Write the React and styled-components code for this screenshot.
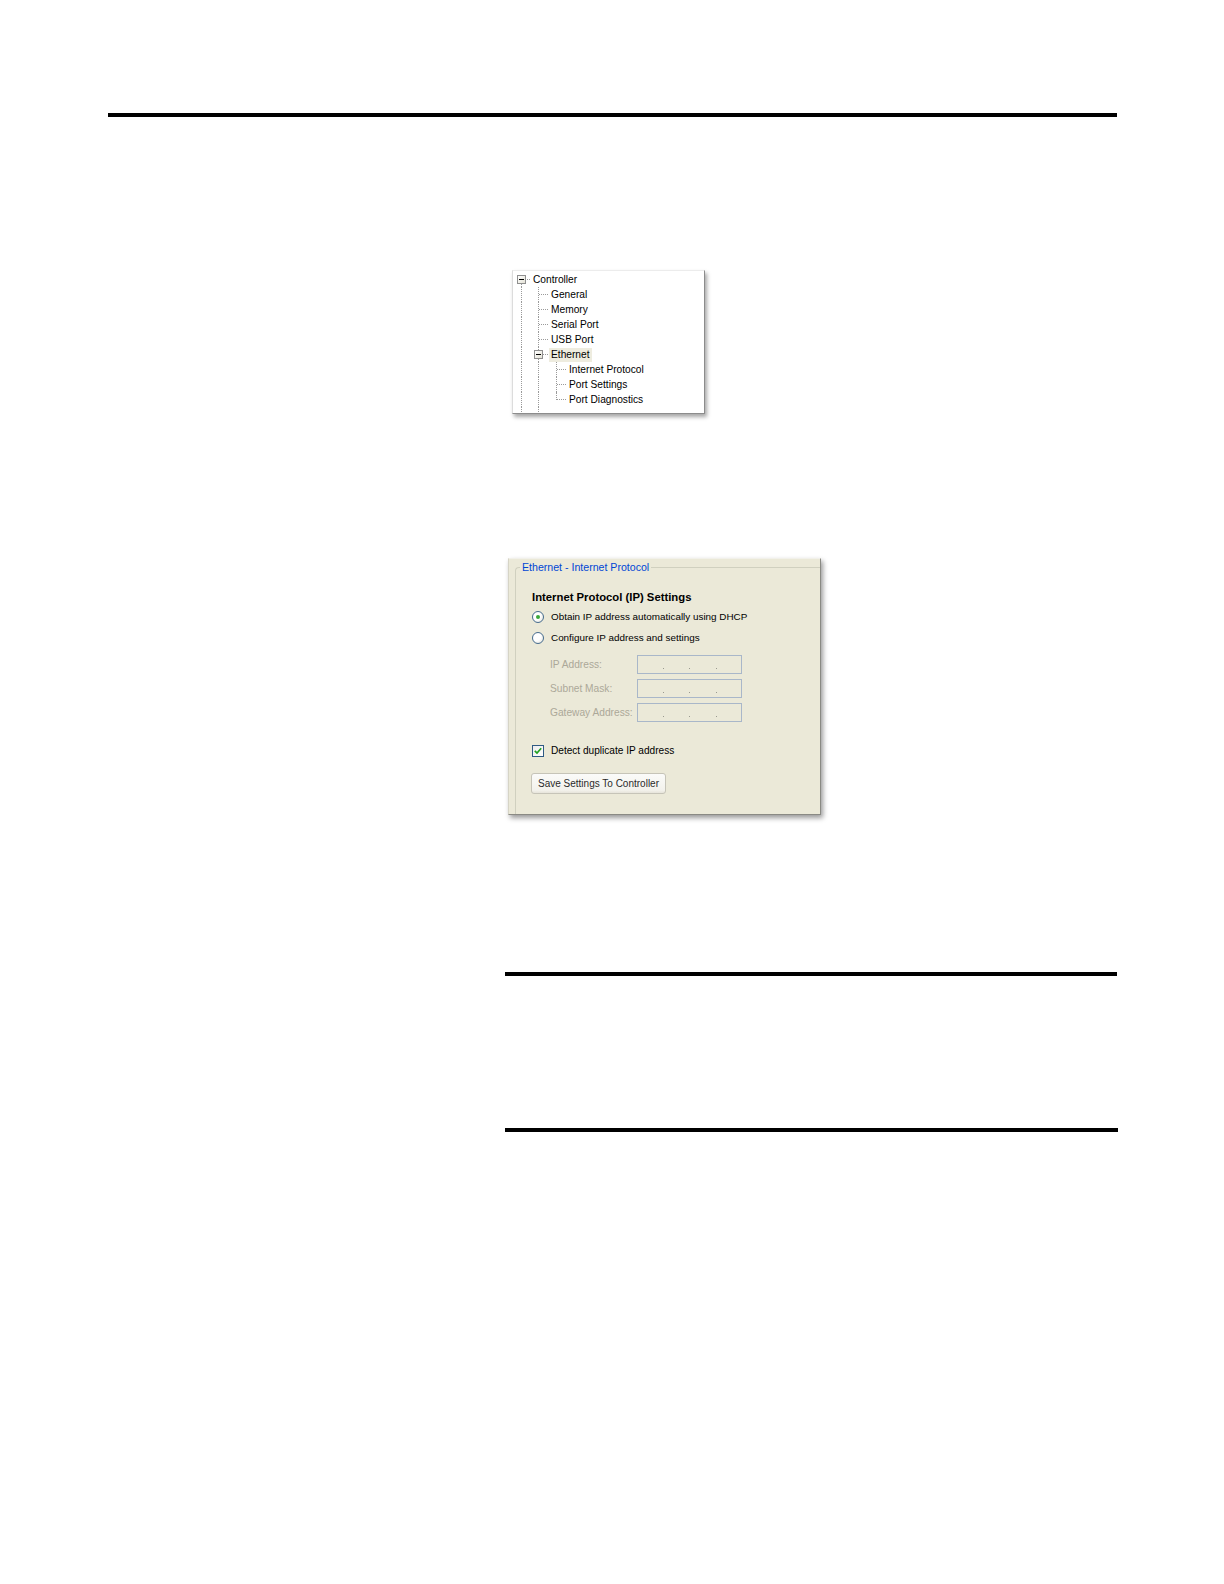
import React from 'react';
import styled, { createGlobalStyle } from 'styled-components';

const GlobalStyle = createGlobalStyle`
  html, body {
    margin: 0;
    padding: 0;
    background: #ffffff;
  }

  body {
    font-family: "Liberation Sans", Arial, sans-serif;
    color: #000000;
  }
`;

const TREE = [
  { label: 'Controller', guides: [], node: 'box-open', line: 'bottom' },
  { label: 'General', guides: ['full'], node: 'stub', line: 'full' },
  { label: 'Memory', guides: ['full'], node: 'stub', line: 'full' },
  { label: 'Serial Port', guides: ['full'], node: 'stub', line: 'full' },
  { label: 'USB Port', guides: ['full'], node: 'stub', line: 'full' },
  { label: 'Ethernet', guides: ['full'], node: 'box-open', line: 'full', selected: true },
  { label: 'Internet Protocol', guides: ['full', 'full'], node: 'stub', line: 'full' },
  { label: 'Port Settings', guides: ['full', 'full'], node: 'stub', line: 'full' },
  { label: 'Port Diagnostics', guides: ['full', 'full'], node: 'stub', line: 'top' },
];

const ADDRESSES = ['IP Address:', 'Subnet Mask:', 'Gateway Address:'];

export default function App() {
  return (
    <>
      <GlobalStyle />
      <Page>
        <Rule $left={108} $width={1009} />

        <TreePanel>
          {TREE.map((item) => (
            <TreeRow key={item.label}>
              {item.guides.map((g, i) => (
                <Guide key={i} $line={g} />
              ))}
              <Guide $line={item.line} $stub>
                {item.node === 'box-open' && <Expander />}
              </Guide>
              <TreeLabel $selected={item.selected}>{item.label}</TreeLabel>
            </TreeRow>
          ))}
          <TreeRow>
            <Guide $line="full" />
            <Guide $line="full" />
          </TreeRow>
        </TreePanel>

        <IpPanel>
          <GroupBox>
            <Legend>Ethernet - Internet Protocol</Legend>
            <GroupBody>
              <Heading>Internet Protocol (IP) Settings</Heading>

              <OptionRow $top={6}>
                <Radio $checked />
                <OptionText $narrow>Obtain IP address automatically using DHCP</OptionText>
              </OptionRow>
              <OptionRow $top={8}>
                <Radio />
                <OptionText $narrow>Configure IP address and settings</OptionText>
              </OptionRow>

              <AddressGrid>
                {ADDRESSES.map((label) => (
                  <React.Fragment key={label}>
                    <AddressLabel>{label}</AddressLabel>
                    <AddressBox>
                      <Octet />
                      <OctetDot />
                      <Octet />
                      <OctetDot />
                      <Octet />
                      <OctetDot />
                      <Octet />
                    </AddressBox>
                  </React.Fragment>
                ))}
              </AddressGrid>

              <OptionRow $top={22}>
                <CheckBox>
                  <svg width="8" height="8" viewBox="0 0 8 8">
                    <path d="M0.8 3.8 L3 6 L7.2 1.2" fill="none" stroke="#21a121" strokeWidth="1.7" />
                  </svg>
                </CheckBox>
                <OptionText>Detect duplicate IP address</OptionText>
              </OptionRow>

              <SaveButton type="button">Save Settings To Controller</SaveButton>
            </GroupBody>
          </GroupBox>
        </IpPanel>

        <Rule $left={505} $width={612} $top={157} />
        <Rule $left={505} $width={613} $top={152} />
      </Page>
    </>
  );
}

const Page = styled.div`
  width: 1224px;
  min-height: 1584px;
  box-sizing: border-box;
  padding-top: 113px;
  display: flex;
  flex-direction: column;
  align-items: flex-start;
`;

const Rule = styled.div`
  margin-left: ${(p) => p.$left}px;
  margin-top: ${(p) => p.$top || 0}px;
  width: ${(p) => p.$width}px;
  height: 4px;
  background: #000000;
`;

/* ---------- tree ---------- */

const TreePanel = styled.div`
  margin-top: 153px;
  margin-left: 512px;
  width: 193px;
  height: 144px;
  box-sizing: border-box;
  padding-top: 1px;
  overflow: hidden;
  background: #ffffff;
  border-top: 1px solid #ececec;
  border-left: 1px solid #dcdcdc;
  border-right: 1px solid #8c8c8c;
  border-bottom: 1px solid #8c8c8c;
  box-shadow: 2px 3px 4px rgba(0, 0, 0, 0.35);
`;

const TreeRow = styled.div`
  display: flex;
  align-items: center;
  height: 15px;
  font-size: 10.2px;
  line-height: 15px;
`;

const Guide = styled.span`
  position: relative;
  flex: 0 0 18px;
  height: 15px;
  display: flex;
  align-items: center;
  justify-content: center;

  &:first-child {
    flex-basis: 17px;
  }

  &::before {
    content: '';
    display: ${(p) => (p.$line === 'none' ? 'none' : 'block')};
    position: absolute;
    left: 8px;
    top: ${(p) => (p.$line === 'bottom' ? '8px' : '0')};
    height: ${(p) => (p.$line === 'top' ? '8px' : 'auto')};
    bottom: ${(p) => (p.$line === 'top' ? 'auto' : '0')};
    border-left: 1px dotted #9a9a9a;
  }

  &::after {
    content: '';
    display: ${(p) => (p.$stub ? 'block' : 'none')};
    position: absolute;
    left: 9px;
    right: 0;
    top: 7px;
    border-top: 1px dotted #9a9a9a;
  }
`;

const Expander = styled.span`
  position: relative;
  z-index: 1;
  width: 9px;
  height: 9px;
  box-sizing: border-box;
  margin-left: -1px;
  border: 1px solid #8f8f8f;
  background: linear-gradient(135deg, #ffffff 0%, #e4e2d6 100%);
  display: flex;
  align-items: center;
  justify-content: center;

  &::before {
    content: '';
    width: 5px;
    height: 1px;
    background: #000000;
  }
`;

const TreeLabel = styled.span`
  padding: 0 2px;
  margin-left: 1px;
  white-space: nowrap;
  line-height: 14px;
  background: ${(p) => (p.$selected ? '#eeecdf' : 'transparent')};
`;

/* ---------- internet protocol panel ---------- */

const IpPanel = styled.div`
  margin-top: 144px;
  margin-left: 508px;
  width: 313px;
  height: 257px;
  box-sizing: border-box;
  padding: 2px 0 0 6px;
  overflow: hidden;
  background: #ebe9d8;
  border-top: 1px solid #f2f1ea;
  border-left: 1px solid #d6d4c6;
  border-right: 1px solid #8a8a84;
  border-bottom: 1px solid #8a8a84;
  box-shadow: 2px 3px 5px rgba(0, 0, 0, 0.4);
  font-size: 10.2px;
`;

const GroupBox = styled.fieldset`
  margin: 0;
  padding: 0;
  height: 320px;
  box-sizing: border-box;
  border: 1px solid #d0d0bf;
  border-right: none;
  border-bottom: none;
  border-top-left-radius: 4px;
  min-width: 0;
`;

const Legend = styled.legend`
  padding: 0 2px;
  margin-left: 4px;
  color: #0046d5;
  font-size: 10.6px;
  line-height: 13px;
`;

const GroupBody = styled.div`
  padding: 16px 0 0 16px;
  display: flex;
  flex-direction: column;
  align-items: flex-start;
`;

const Heading = styled.div`
  font-size: 11.3px;
  font-weight: bold;
  line-height: 14px;
`;

const OptionRow = styled.div`
  display: flex;
  align-items: center;
  gap: 7px;
  height: 13px;
  margin-top: ${(p) => p.$top}px;
`;

const OptionText = styled.span`
  line-height: 13px;
  white-space: nowrap;
  font-size: ${(p) => (p.$narrow ? '9.9px' : '10.1px')};
`;

const Radio = styled.span`
  width: 12px;
  height: 12px;
  box-sizing: border-box;
  border-radius: 50%;
  border: 1px solid #466c8f;
  background: radial-gradient(circle at 35% 35%, #ffffff 0%, #ffffff 45%, #dcdcd2 100%);
  display: flex;
  align-items: center;
  justify-content: center;

  &::before {
    content: '';
    display: ${(p) => (p.$checked ? 'block' : 'none')};
    width: 4px;
    height: 4px;
    border-radius: 50%;
    background: #3aa83a;
  }
`;

const CheckBox = styled.span`
  width: 12px;
  height: 12px;
  box-sizing: border-box;
  border: 1px solid #2f5a84;
  background: linear-gradient(135deg, #ececec 0%, #ffffff 100%);
  display: flex;
  align-items: center;
  justify-content: center;
`;

const AddressGrid = styled.div`
  display: grid;
  grid-template-columns: 87px 105px;
  grid-auto-rows: 19px;
  row-gap: 5px;
  margin-top: 11px;
  margin-left: 18px;
  align-items: center;
`;

const AddressLabel = styled.span`
  color: #aca899;
  white-space: nowrap;
`;

const AddressBox = styled.span`
  height: 19px;
  box-sizing: border-box;
  border: 1px solid #a9b7c9;
  display: flex;
  align-items: flex-end;
  padding-bottom: 4px;
`;

const Octet = styled.span`
  flex: 1;
`;

const OctetDot = styled.span`
  flex: 0 0 1px;
  height: 1px;
  margin: 0 1px;
  background: #9a9a90;
`;

const SaveButton = styled.button`
  margin-top: 16px;
  margin-left: -1px;
  width: 135px;
  height: 21px;
  padding: 0;
  font-family: "Liberation Sans", Arial, sans-serif;
  font-size: 10px;
  color: #2a2a2a;
  background: linear-gradient(to bottom, #fbfbf9 0%, #f3f2ec 85%, #e6e4da 100%);
  border: 1px solid #c6c4b8;
  border-radius: 3px;
`;
